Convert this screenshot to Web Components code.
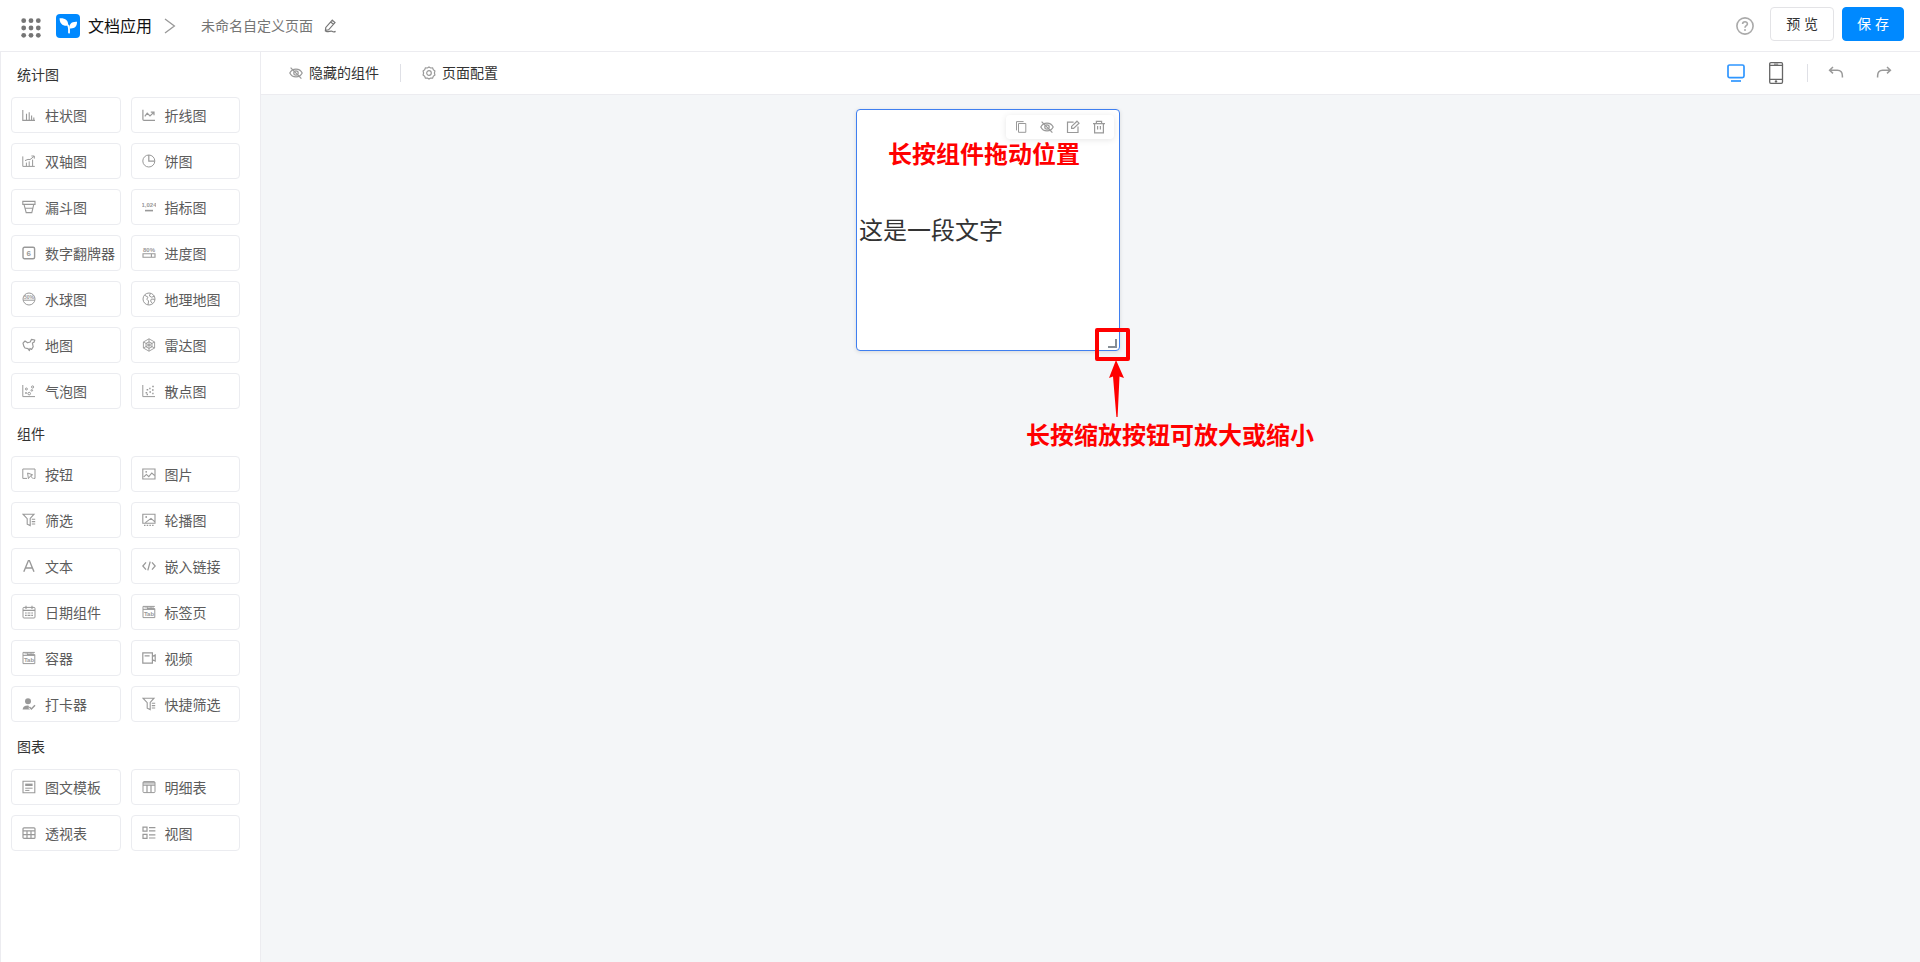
<!DOCTYPE html>
<html lang="zh-CN">
<head>
<meta charset="utf-8">
<title>未命名自定义页面</title>
<style>
html, body { margin: 0; height: 100%; }
body { font: 14px/22px "Noto Sans CJK SC", sans-serif; color: #333; background: #fff; }
</style>
</head>
<body>
<page-designer></page-designer>
<script>
const ICONS = {
  apps: [20, '<g fill="#757575" stroke="none"><circle cx="2.7" cy="2.7" r="2.4"/><circle cx="10" cy="2.7" r="2.4"/><circle cx="17.3" cy="2.7" r="2.4"/><circle cx="2.7" cy="10" r="2.4"/><circle cx="10" cy="10" r="2.4"/><circle cx="17.3" cy="10" r="2.4"/><circle cx="2.7" cy="17.3" r="2.4"/><circle cx="10" cy="17.3" r="2.4"/><circle cx="17.3" cy="17.3" r="2.4"/></g>'],
  logo: [24, '<g stroke="none"><rect width="24" height="24" rx="4" fill="#0089ff"/><path d="M3.6 4.2C9 3.8 12.4 6 12.2 11.6C6.8 12.4 3.6 9.8 3.6 4.2Z" fill="#fff"/><path d="M21 7.8C21.2 12.4 18.4 15 13.4 14.4C12.8 10.4 15.4 7.4 21 7.8Z" fill="#fff"/></g><path d="M12.1 11.5C13.2 13.2 13.2 15 13 18.6" fill="none" stroke="#fff" stroke-width="1.8" stroke-linecap="round"/>'],
  next: [16, '<path d="M3 1L12.4 8L3 15" stroke-width="1.3"/>'],
  pencil: [14, '<path d="M9.3 1.2L12 3.6L5.6 10.8L2.4 11.4L2.8 8.4ZM7.8 3L10.4 5.4M2.4 11.4C2.8 14 7.6 11.6 9 12.2C9.8 12.8 11 13.2 12.6 12.4" stroke-width="1.2"/>'],
  help: [18, '<g stroke-width="1.6"><circle cx="9" cy="9" r="8.1"/><path d="M6.6 7.1C6.6 4 11.5 4.1 11.4 7C11.3 8.8 9 8.7 9 10.8"/></g><circle cx="9" cy="13" r="1" fill="currentColor" stroke="none"/>'],
  desktop: [18, '<rect x="1" y="1" width="16" height="12.6" rx="1.6" stroke-width="1.7"/><path d="M4 17H14" stroke-width="1.7"/>'],
  phone: [22, '<rect x="4.7" y=".7" width="12.8" height="20.6" rx="1.2" stroke-width="1.3"/><path d="M4.7 3.4H17.5M4.7 17.4H17.5" stroke-width="1.1"/><path d="M9 2.1H13.2"/><circle cx="11" cy="19.4" r="1.2" fill="currentColor" stroke="none"/>'],
  undo: [16, '<path d="M5 2L1.6 5.2L5 8.4M1.8 5.2H9.4C13 5.2 14.4 7.4 14.4 11V12.4" stroke-width="1.5"/>'],
  redo: [16, '<path d="M11 2L14.4 5.2L11 8.4M14.2 5.2H6.6C3 5.2 1.6 7.4 1.6 11V12.4" stroke-width="1.5"/>'],
  hide: [14, '<path d="M.8 7C3.2 1.8 10.8 1.8 13.2 7C10.8 12.2 3.2 12.2 .8 7ZM1.6 1.6L12.4 12.6" stroke-width="1.2"/><circle cx="7" cy="7" r="2.2" stroke-width="1.2"/>'],
  gear: [14, '<path d="M7 .9L8.6 2L10.6 1.9L11.3 3.7L12.9 4.9L12.4 7L12.9 9.1L11.3 10.3L10.6 12.1L8.6 12L7 13.1L5.4 12L3.4 12.1L2.7 10.3L1.1 9.1L1.6 7L1.1 4.9L2.7 3.7L3.4 1.9L5.4 2Z" stroke-width="1.2"/><circle cx="7" cy="7" r="2.3" stroke-width="1.2"/>'],
  copy: [14, '<path d="M4.5 3.5H11.8V12.3H4.5ZM2.5 10.4V1.6H9.6"/>'],
  edit: [14, '<path d="M7.6 2.2H1.5V12.5H12V6.6M11 1.2L13 3.2L7.6 8.4H5.6V6.4Z" stroke-width="1.2"/>'],
  trash: [14, '<path d="M1 3.6H13M4.4 3.4V1.4H9.6V3.4M2.6 3.8V12.8H11.4V3.8M5.6 6V9.6M8.4 6V9.6" stroke-width="1.2"/>'],
  bar: [14, '<path d="M.8 2V12.4H13M4.5 12V5.8M7.2 12V4.2M9.6 12V7.4M11.8 12V9.6" stroke-width="1.1"/>'],
  line: [14, '<path d="M.9 1.8V11.2Q.9 12.4 2 12.4H13M2.8 8.4L5.2 5.2L8 8L11.8 4.4M8.8 4.2H12V7.2" stroke-width="1.2"/>'],
  dual: [14, '<path d="M.8 2.4V12.4H12.8M4.4 12V8.6M7.2 12V7.4M10.6 12V5.6M3 6.6L6 5.4L8 5.6L12 2.4M9.4 2H12.3V4.6"/>'],
  pie: [14, '<circle cx="6.8" cy="7" r="6"/><path d="M6.8 1V7.2H12.8" stroke-width="1.2"/>'],
  funnel: [14, '<path d="M.8 1.4H13V4.4H.8ZM2 4.4L4.2 12.6H9.8L11.8 4.4M2.8 8.2H11" stroke-width="1.1"/>'],
  metric: [14, '<text x="7" y="6.8" font-size="6" font-weight="700" text-anchor="middle">1,024</text><path d="M3 10.6H11" stroke-width="1.6"/>'],
  flip: [14, '<rect x="1" y="1.2" width="11.6" height="11.6" rx="1.5" stroke-width="1.4"/><text x="6.8" y="9.8" font-size="8" font-weight="700" text-anchor="middle">6</text>'],
  progress: [14, '<text x="7" y="6" font-size="6" font-weight="700" text-anchor="middle">80%</text><path d="M1 7.8H13V11.2H1ZM9.4 7.8V11.2" stroke-width="1.1"/>'],
  liquid: [14, '<circle cx="7" cy="7" r="6"/><path d="M1.4 8.2H12.6"/><text x="7" y="6.8" font-size="5" font-weight="700" text-anchor="middle">50%</text>'],
  globe: [14, '<circle cx="7" cy="7" r="6"/><path d="M2.6 3.2L6 5.2L4.8 7.2L6.6 9L6 12.8M8.4 1.4L7.4 4L9.6 5.2L12.6 4.2M12.8 7.4L9.4 7L8.6 9L10.4 11.6"/>'],
  map: [14, '<path d="M1 5.2L3 3L5.6 4.8L8.2 4L9.4 1.4L12.8 2L12 4.2L10.4 5L11.2 8.8L9.6 11.4L8 10.4L7.4 12.6L6 10.6L3 10L1.8 8.2Z" stroke-width="1.2" stroke-linejoin="round"/>'],
  radar: [14, '<path d="M7 .8L12.6 4V10L7 13.2L1.4 10V4ZM7 3.8L10 5.4V8.8L7 10.4L4 8.8V5.4ZM7 .8V13.2M1.4 4L12.6 10M12.6 4L1.4 10" stroke-width=".9"/>'],
  bubble: [14, '<path d="M.8 1V12.6H13"/><circle cx="4.4" cy="5" r="1"/><circle cx="7.2" cy="9.6" r="1.3"/><circle cx="10.6" cy="3" r="1.1"/><circle cx="9.8" cy="6.4" r=".8"/><circle cx="4" cy="9" r=".6"/>'],
  scatter: [14, '<path d="M.8 1V12.6H13"/><path d="M3.6 8.8h1.6M4.6 5.8h1.6M7.2 4.4h1.4M7.4 8h1.6M10.2 2.4h1.6M10 6h1.6M10.2 9.4h1.4M4.6 10.6h1.4" stroke-width="1.5"/>'],
  button: [14, '<path d="M5 11.4H.8V2H13V11.4H11.4M5.6 6L10.6 7.8L8.6 8.8L10.8 11.6M5.6 6L6.4 11.6L8.6 8.8"/>'],
  image: [14, '<path d="M.8 2H13V12H.8ZM1.8 9.8L4.4 7.4L6.8 9.6L9.8 6L12.4 8.4" stroke-width="1.1"/><circle cx="4.2" cy="4.8" r=".9" fill="currentColor" stroke="none"/>'],
  filter: [14, '<path d="M1 1.2H12L8.2 5.4V12.6L5.2 11.2V5.6ZM9.8 6.2H13.2M9.8 8.6H13.2M9.8 11H13.2" stroke-width="1.1"/>'],
  carousel: [14, '<path d="M.8 1.2H13V10.2H.8ZM3.4 9.6L9 5.4L12.6 8.6" stroke-width="1.1"/><circle cx="4.2" cy="4" r=".9" fill="currentColor" stroke="none"/><path d="M2 12.4H12" stroke-width="1.4" stroke-dasharray="1.5 1.2"/>'],
  text: [14, '<path d="M1.8 12.8L6.4 1.6H7.4L12 12.8M3.4 9H10.4" stroke-width="1.4"/>'],
  embed: [14, '<path d="M4 3.4L.8 7L4 10.6M10 3.4L13.2 7L10 10.6M8.2 2.6L5.8 11.4" stroke-width="1.3"/>'],
  date: [14, '<rect x="1" y="2.4" width="12" height="10.6" rx="1"/><path d="M1 5.4H13M4 .8V4M10 .8V4M3 8H11M3 10.4H11" stroke-width="1.1"/><path d="M5.2 7V12M8.8 7V12" stroke="#fff" stroke-width=".8"/>'],
  tab: [14, '<path d="M1 12.6V1.4H12.8M5 3.6H12.8V12.6H1M1 4.4H12.8"/><path d="M5.4 1.6V4M9 1.6V4M2.4 2.8H12" stroke-width=".7"/><text x="7" y="11" font-size="6" font-weight="700" text-anchor="middle">Tab</text>'],
  video: [14, '<path d="M.8 1.8H10.4V12.2H.8ZM2.6 4.8H7.6M10.6 5.4L13.2 4V10L10.6 8.8" stroke-width="1.2"/>'],
  punch: [14, '<circle cx="6" cy="4.2" r="3" fill="currentColor" stroke="none"/><path d="M.6 12.6C.8 9.4 3 8.4 6.4 8.6L8.2 12.6Z" fill="currentColor" stroke="none"/><path d="M7.4 10L9.4 12L13 8.2" stroke="#fff" stroke-width="3"/><path d="M7.4 10L9.4 12L13 8.2" stroke-width="1.5"/>'],
  template: [14, '<path d="M1 1.2H12.8V12.8H1Z" stroke-width="1.1"/><path d="M3.2 4.8H10.6" stroke-width="2.4"/><path d="M3.2 8.2H10.6M3.2 10.4H7.4"/>'],
  detail: [14, '<rect x="1" y="1.6" width="12" height="11" rx="1"/><path d="M1 2.8H13M1 5.2H13M5 5.2V12.4M9 5.2V12.4" stroke-width="1.2"/>'],
  pivot: [14, '<rect x="1" y="1.8" width="12" height="10.6" rx="1" stroke-width="1.2"/><path d="M1 4.8H13M1 8.6H13M5 4.8V12M9 4.8V12" stroke-width="1.2"/>'],
  view: [14, '<path d="M1 1.2H5V5.2H1ZM1 8.4H5V12.4H1ZM7 1.6H13.4M7 4.8H13.4M7 8.8H13.4M7 12H13.4" stroke-width="1.2"/>']
};

function define(name, html, setup) {
  const template = document.createElement('template');
  template.innerHTML = html;
  customElements.define(name, class extends HTMLElement {
    constructor() {
      super();
      this.attachShadow({ mode: 'open' }).append(template.content.cloneNode(true));
    }
    connectedCallback() { if (setup) setup(this, this.shadowRoot); }
  });
}

define('ui-icon', `
  <style>
    :host { display: block; flex: none; line-height: 0; color: #999; }
    text { font-family: "Liberation Sans", sans-serif; fill: currentColor; stroke: none; }
  </style>
  <svg fill="none" stroke="currentColor" aria-hidden="true"></svg>`,
  (host, root) => {
    const [size, body] = ICONS[host.getAttribute('name')];
    const svg = root.querySelector('svg');
    svg.setAttribute('viewBox', `0 0 ${size} ${size}`);
    svg.setAttribute('width', size);
    svg.setAttribute('height', size);
    svg.innerHTML = body;
  });

define('icon-button', `
  <style>
    :host { display: block; flex: none; }
    button { display: flex; align-items: center; gap: 6px; padding: 0; border: 0; background: none; font: inherit; color: inherit; cursor: pointer; }
  </style>
  <button type="button"><slot></slot></button>`,
  (host, root) => {
    const label = host.getAttribute('label');
    if (label) root.querySelector('button').setAttribute('aria-label', label);
  });

define('action-button', `
  <style>
    :host { display: block; }
    button { box-sizing: border-box; height: 34px; padding: 0 15px; border: 1px solid #e3e3e6; border-radius: 4px; background: #fff; color: #333; font-family: "Liberation Sans", "Noto Sans CJK SC", sans-serif; font-size: 14px; line-height: 22px; cursor: pointer; }
    :host([primary]) button { padding: 0 14px; border-color: #0089ff; background: #0089ff; color: #fff; }
  </style>
  <button type="button"><slot></slot></button>`);

define('app-header', `
  <style>
    :host { display: block; }
    header { display: flex; align-items: center; height: 51px; padding: 0 16px 0 21px; border-bottom: 1px solid #ececf0; }
    nav { display: flex; align-items: center; }
    a { display: flex; align-items: center; gap: 8px; margin: 0 0 0 15px; color: #111; font-size: 16px; line-height: 24px; text-decoration: none; }
    a span, .name { padding-bottom: 2px; }
    .next { margin: 0 23px 0 10px; }
    .name { margin-right: 10px; color: #757575; }
    .actions { display: flex; align-items: center; gap: 8px; margin: 0 0 3px auto; }
    .help { margin: 4px 8px 0 0; }
    .help ui-icon { color: #aaa; }
    .pencil { color: #777; }
    .apps { margin-top: 4px; }
  </style>
  <header>
    <icon-button class="apps" label="应用列表"><ui-icon name="apps"></ui-icon></icon-button>
    <nav>
      <a href="#"><ui-icon name="logo"></ui-icon><span>文档应用</span></a>
      <ui-icon class="next" name="next"></ui-icon>
      <span class="name">未命名自定义页面</span>
      <icon-button label="重命名"><ui-icon class="pencil" name="pencil"></ui-icon></icon-button>
    </nav>
    <div class="actions">
      <icon-button class="help" label="帮助"><ui-icon name="help"></ui-icon></icon-button>
      <action-button>预 览</action-button>
      <action-button primary>保 存</action-button>
    </div>
  </header>`);

define('palette-item', `
  <style>
    :host { display: block; min-width: 0; }
    button { display: flex; align-items: center; gap: 9px; box-sizing: border-box; width: 100%; height: 36px; padding: 0 0 0 10px; border: 1px solid #ebecf0; border-radius: 4px; background: #fff; color: #5c5c5c; font: inherit; white-space: nowrap; cursor: grab; }
  </style>
  <button type="button"><span><slot></slot></span></button>`,
  (host, root) => {
    const icon = document.createElement('ui-icon');
    icon.setAttribute('name', host.getAttribute('icon'));
    root.querySelector('button').prepend(icon);
  });

define('palette-group', `
  <style>
    :host { display: block; }
    h2 { margin: 0 0 12px; padding-left: 6px; font-size: 14px; line-height: 22px; font-weight: 400; color: #333; }
    div { display: grid; grid-template-columns: 1fr 1fr; gap: 10px; }
  </style>
  <h2></h2>
  <div><slot></slot></div>`,
  (host, root) => { root.querySelector('h2').textContent = host.getAttribute('heading'); });

define('component-palette', `
  <style>
    :host { display: flex; flex-direction: column; gap: 13px; box-sizing: border-box; width: 261px; padding: 11px 20px 11px 10px; border: solid #ececf0; border-width: 0 1px; background: #fff; }
  </style>
  <palette-group heading="统计图">
    <palette-item icon="bar">柱状图</palette-item>
    <palette-item icon="line">折线图</palette-item>
    <palette-item icon="dual">双轴图</palette-item>
    <palette-item icon="pie">饼图</palette-item>
    <palette-item icon="funnel">漏斗图</palette-item>
    <palette-item icon="metric">指标图</palette-item>
    <palette-item icon="flip">数字翻牌器</palette-item>
    <palette-item icon="progress">进度图</palette-item>
    <palette-item icon="liquid">水球图</palette-item>
    <palette-item icon="globe">地理地图</palette-item>
    <palette-item icon="map">地图</palette-item>
    <palette-item icon="radar">雷达图</palette-item>
    <palette-item icon="bubble">气泡图</palette-item>
    <palette-item icon="scatter">散点图</palette-item>
  </palette-group>
  <palette-group heading="组件">
    <palette-item icon="button">按钮</palette-item>
    <palette-item icon="image">图片</palette-item>
    <palette-item icon="filter">筛选</palette-item>
    <palette-item icon="carousel">轮播图</palette-item>
    <palette-item icon="text">文本</palette-item>
    <palette-item icon="embed">嵌入链接</palette-item>
    <palette-item icon="date">日期组件</palette-item>
    <palette-item icon="tab">标签页</palette-item>
    <palette-item icon="tab">容器</palette-item>
    <palette-item icon="video">视频</palette-item>
    <palette-item icon="punch">打卡器</palette-item>
    <palette-item icon="filter">快捷筛选</palette-item>
  </palette-group>
  <palette-group heading="图表">
    <palette-item icon="template">图文模板</palette-item>
    <palette-item icon="detail">明细表</palette-item>
    <palette-item icon="pivot">透视表</palette-item>
    <palette-item icon="view">视图</palette-item>
  </palette-group>`);

define('canvas-toolbar', `
  <style>
    :host { display: flex; align-items: center; justify-content: space-between; height: 42px; padding: 0 28px; border-bottom: 1px solid #ececf0; background: #fff; }
    div { display: flex; align-items: center; }
    i { width: 1px; height: 18px; background: #dfe0e6; }
    span { padding-bottom: 3px; }
    .left { gap: 21px; }
    .right { gap: 20px; }
    .desktop { color: #2f96ff; }
    .phone { color: #666; }
    .redo { margin-left: 12px; }
  </style>
  <div class="left">
    <icon-button><ui-icon name="hide"></ui-icon><span>隐藏的组件</span></icon-button>
    <i></i>
    <icon-button><ui-icon name="gear"></ui-icon><span>页面配置</span></icon-button>
  </div>
  <div class="right">
    <icon-button label="电脑端"><ui-icon class="desktop" name="desktop"></ui-icon></icon-button>
    <icon-button label="移动端"><ui-icon class="phone" name="phone"></ui-icon></icon-button>
    <i></i>
    <icon-button label="撤销"><ui-icon name="undo"></ui-icon></icon-button>
    <icon-button class="redo" label="重做"><ui-icon name="redo"></ui-icon></icon-button>
  </div>`);

define('text-widget', `
  <style>
    :host { display: flex; align-items: center; box-sizing: border-box; padding: 0 2px; border: 1px solid #3f7ff0; border-radius: 4px; background: #fff; box-shadow: 0 1px 4px rgba(0,0,0,.12); }
    p { margin: 0; padding-bottom: 3px; font-size: 24px; line-height: 36px; color: #333; }
    .tools { position: absolute; top: 5px; right: 5px; display: flex; align-items: center; gap: 12px; height: 24px; padding: 0 8px; border-radius: 4px; background: #fff; box-shadow: 0 1px 6px rgba(0,0,0,.1); }
    .resize { position: absolute; right: 2px; bottom: 2px; width: 9px; height: 9px; box-sizing: border-box; border: solid #868e96; border-width: 0 2px 2px 0; cursor: nwse-resize; }
  </style>
  <p><slot></slot></p>
  <div class="tools">
    <icon-button label="复制"><ui-icon name="copy"></ui-icon></icon-button>
    <icon-button label="隐藏"><ui-icon name="hide"></ui-icon></icon-button>
    <icon-button label="编辑"><ui-icon name="edit"></ui-icon></icon-button>
    <icon-button label="删除"><ui-icon name="trash"></ui-icon></icon-button>
  </div>
  <span class="resize"></span>`);

define('design-canvas', `
  <style>
    :host { display: block; position: relative; background: #f4f6f8; overflow: hidden; }
    text-widget { position: absolute; left: 595px; top: 14px; width: 264px; height: 242px; }
    .note { position: absolute; margin: 0; font-size: 24px; line-height: 36px; font-weight: 700; color: #f00; white-space: nowrap; }
    .move { left: 627px; top: 40px; }
    .scale { left: 765px; top: 321px; }
    .frame { position: absolute; left: 834px; top: 233px; width: 35px; height: 33px; box-sizing: border-box; border: 4px solid #f00; border-radius: 2px; }
    .arrow { position: absolute; left: 847px; top: 265px; }
  </style>
  <text-widget>这是一段文字</text-widget>
  <p class="note move">长按组件拖动位置</p>
  <span class="frame"></span>
  <svg class="arrow" width="16" height="57" viewBox="0 0 16 57" fill="#f00" aria-hidden="true"><path d="M8 0L16 18L11.5 16.5L9.6 57H8.4L5 16.5L1 18Z"/></svg>
  <p class="note scale">长按缩放按钮可放大或缩小</p>`);

define('page-designer', `
  <style>
    :host { display: grid; grid-template: auto auto 1fr / auto 1fr; min-height: 100%; }
    app-header { grid-column: 1 / -1; }
    component-palette { grid-row: 2 / 4; }
  </style>
  <app-header></app-header>
  <component-palette></component-palette>
  <canvas-toolbar></canvas-toolbar>
  <design-canvas></design-canvas>`);
</script>
</body>
</html>
